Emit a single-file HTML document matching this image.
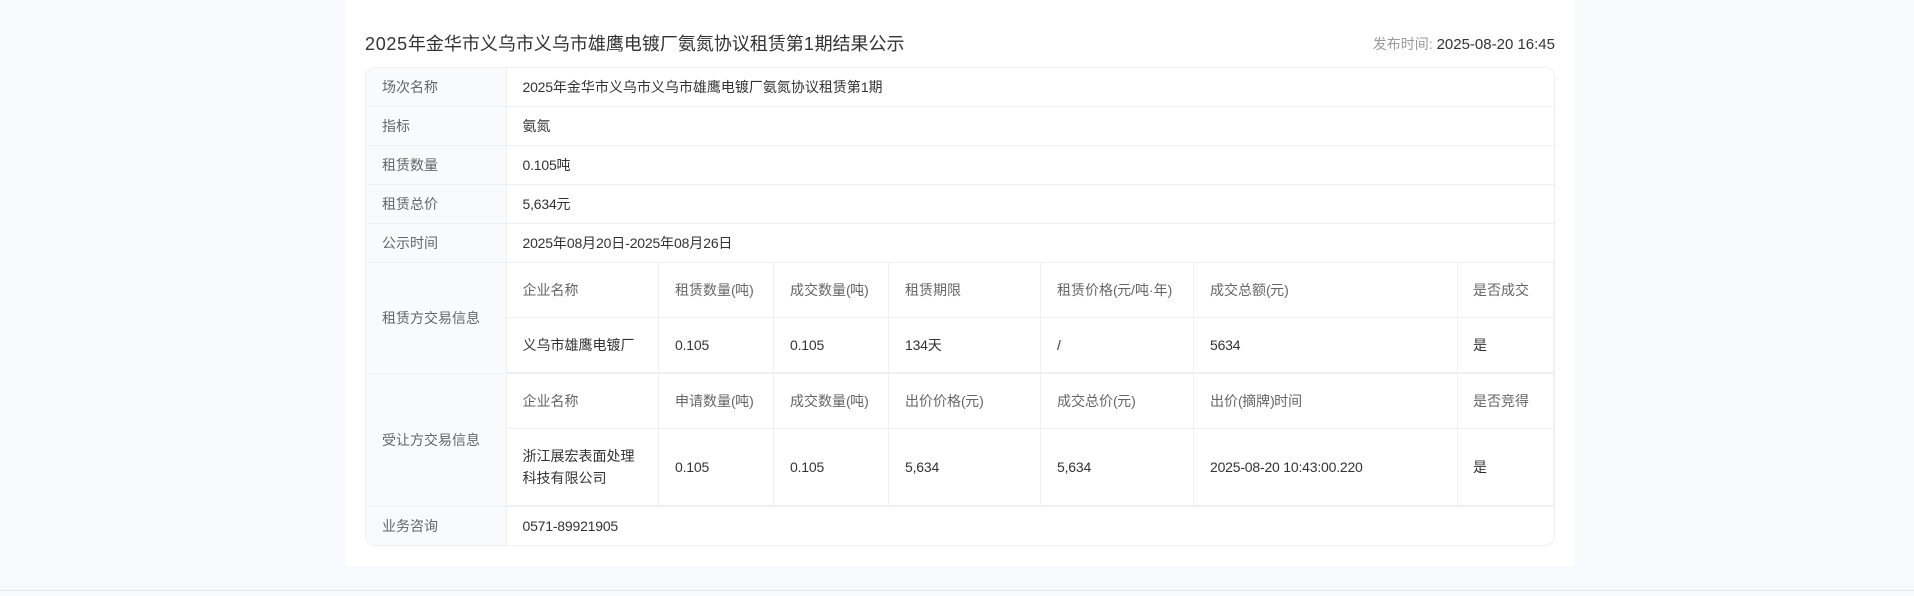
<!DOCTYPE html>
<html lang="zh-CN">
<head>
<meta charset="utf-8">
<title>结果公示</title>
<style>
html,body{margin:0;padding:0;width:1914px;height:596px;overflow:hidden;background:#f8f9fc;}
body{position:relative;font-family:"Liberation Sans","Noto Sans CJK SC",sans-serif;font-size:14px;color:#333;}
#panel{position:absolute;left:345px;top:0;width:1230px;height:566px;background:#fff;}
#foot{position:absolute;left:0;top:590px;width:1914px;height:1px;background:#e6e8ee;}
#tbl{position:absolute;left:365px;top:67px;width:1188px;height:477px;border:1px solid #f0f0f0;border-radius:10px;overflow:hidden;background:#fff;}
#lbl{position:absolute;left:366px;top:68px;width:140px;height:477px;background:#f9fafc;border-radius:9px 0 0 9px;}
.h,.v{position:absolute;background:#f0f0f0;}
.t{position:absolute;line-height:22px;height:22px;white-space:nowrap;}
.l{color:#666;}
.m{color:#333;}
.c{color:#666;}
.n{letter-spacing:-.2px;}
.p{letter-spacing:-.6px;}
.d{letter-spacing:.7px;}
h1{position:absolute;margin:0;left:365px;top:31px;font-size:18px;line-height:26px;font-weight:400;color:#333;white-space:nowrap;}
#time{position:absolute;right:359px;top:33px;line-height:22px;white-space:nowrap;color:#333;}
#time span{color:#999;}
#time b{font-weight:400;font-size:15px;}
</style>
</head>
<body>
<div id="panel"></div>
<div id="foot"></div>
<h1><span class="d">2025</span>年金华市义乌市义乌市雄鹰电镀厂氨氮协议租赁第<span class="d">1</span>期结果公示</h1>
<div id="time"><span>发布时间:</span> <b>2025-08-20 16:45</b></div>
<div id="tbl"></div>
<div id="lbl"></div>

<div class="h" style="left:366px;top:106px;width:1188px;height:1px"></div>
<div class="h" style="left:366px;top:145px;width:1188px;height:1px"></div>
<div class="h" style="left:366px;top:184px;width:1188px;height:1px"></div>
<div class="h" style="left:366px;top:223px;width:1188px;height:1px"></div>
<div class="h" style="left:366px;top:262px;width:1188px;height:1px"></div>
<div class="h" style="left:507px;top:317px;width:1047px;height:1px"></div>
<div class="h" style="left:366px;top:373px;width:140px;height:1px"></div>
<div class="h" style="left:507px;top:372px;width:1047px;height:2px"></div>
<div class="h" style="left:507px;top:428px;width:1047px;height:1px"></div>
<div class="h" style="left:366px;top:506px;width:140px;height:1px"></div>
<div class="h" style="left:507px;top:505px;width:1047px;height:2px"></div>

<div class="v" style="left:506px;top:68px;width:1px;height:477px"></div>
<div class="v" style="left:658px;top:262px;width:1px;height:243px"></div>
<div class="v" style="left:773px;top:262px;width:1px;height:243px"></div>
<div class="v" style="left:888px;top:262px;width:1px;height:243px"></div>
<div class="v" style="left:1040px;top:262px;width:1px;height:243px"></div>
<div class="v" style="left:1193px;top:262px;width:1px;height:243px"></div>
<div class="v" style="left:1457px;top:262px;width:1px;height:243px"></div>
<div class="v" style="left:1553px;top:262px;width:1px;height:243px"></div>

<div class="t l" style="left:382px;top:76px">场次名称</div>
<div class="t m" style="left:522.5px;top:76px"><span class="n">2025</span>年金华市义乌市义乌市雄鹰电镀厂氨氮协议租赁第<span class="n">1</span>期</div>
<div class="t l" style="left:382px;top:115px">指标</div>
<div class="t m" style="left:522.5px;top:115px">氨氮</div>
<div class="t l" style="left:382px;top:154px">租赁数量</div>
<div class="t m" style="left:522.5px;top:154px"><span class="n">0.105</span>吨</div>
<div class="t l" style="left:382px;top:193px">租赁总价</div>
<div class="t m" style="left:522.5px;top:193px"><span class="n">5,634</span>元</div>
<div class="t l" style="left:382px;top:232px">公示时间</div>
<div class="t m" style="left:522.5px;top:232px"><span class="n">2025</span>年<span class="n">08</span>月<span class="n">20</span>日<span class="n">-2025</span>年<span class="n">08</span>月<span class="n">26</span>日</div>

<div class="t l" style="left:382px;top:307px">租赁方交易信息</div>
<div class="t c" style="left:522.5px;top:279px">企业名称</div>
<div class="t c" style="left:675px;top:279px">租赁数量<span class="p">(</span>吨<span class="p">)</span></div>
<div class="t c" style="left:790px;top:279px">成交数量<span class="p">(</span>吨<span class="p">)</span></div>
<div class="t c" style="left:905px;top:279px">租赁期限</div>
<div class="t c" style="left:1057px;top:279px">租赁价格<span class="p">(</span>元/吨·年<span class="p">)</span></div>
<div class="t c" style="left:1210px;top:279px">成交总额<span class="p">(</span>元<span class="p">)</span></div>
<div class="t c" style="left:1473px;top:279px">是否成交</div>
<div class="t m" style="left:522.5px;top:334px">义乌市雄鹰电镀厂</div>
<div class="t m n" style="left:675px;top:334px">0.105</div>
<div class="t m n" style="left:790px;top:334px">0.105</div>
<div class="t m" style="left:905px;top:334px"><span class="n">134</span>天</div>
<div class="t m" style="left:1057px;top:334px">/</div>
<div class="t m n" style="left:1210px;top:334px">5634</div>
<div class="t m" style="left:1473px;top:334px">是</div>

<div class="t l" style="left:382px;top:429px">受让方交易信息</div>
<div class="t c" style="left:522.5px;top:390px">企业名称</div>
<div class="t c" style="left:675px;top:390px">申请数量<span class="p">(</span>吨<span class="p">)</span></div>
<div class="t c" style="left:790px;top:390px">成交数量<span class="p">(</span>吨<span class="p">)</span></div>
<div class="t c" style="left:905px;top:390px">出价价格<span class="p">(</span>元<span class="p">)</span></div>
<div class="t c" style="left:1057px;top:390px">成交总价<span class="p">(</span>元<span class="p">)</span></div>
<div class="t c" style="left:1210px;top:390px">出价<span class="p">(</span>摘牌<span class="p">)</span>时间</div>
<div class="t c" style="left:1473px;top:390px">是否竞得</div>
<div class="t m" style="left:522.5px;top:445px">浙江展宏表面处理</div>
<div class="t m" style="left:522.5px;top:467px">科技有限公司</div>
<div class="t m n" style="left:675px;top:456px">0.105</div>
<div class="t m n" style="left:790px;top:456px">0.105</div>
<div class="t m n" style="left:905px;top:456px">5,634</div>
<div class="t m n" style="left:1057px;top:456px">5,634</div>
<div class="t m n" style="left:1210px;top:456px">2025-08-20 10:43:00.220</div>
<div class="t m" style="left:1473px;top:456px">是</div>

<div class="t l" style="left:382px;top:515px">业务咨询</div>
<div class="t m n" style="left:522.5px;top:515px">0571-89921905</div>
</body>
</html>
